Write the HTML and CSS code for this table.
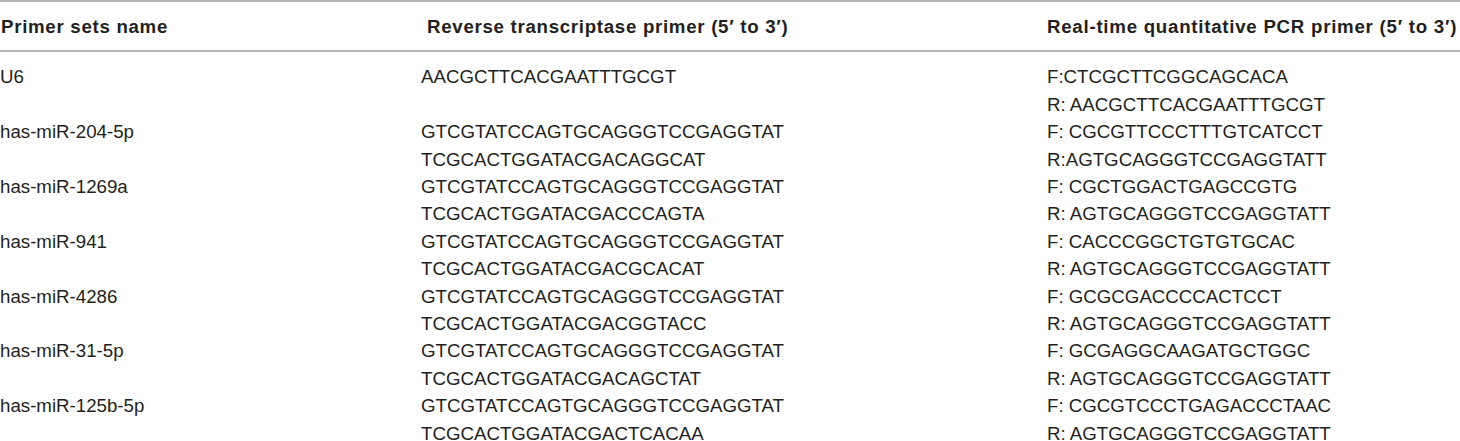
FILE: index.html
```html
<!DOCTYPE html>
<html>
<head>
<meta charset="utf-8">
<link rel="stylesheet" href="styles.css">
</head>
<body>
<div class="table">
  <div class="head">
    <div class="h h1">Primer sets name</div>
    <div class="h h2">Reverse transcriptase primer (5′ to 3′)</div>
    <div class="h h3">Real-time quantitative PCR primer (5′ to 3′)</div>
  </div>
  <div class="body">
    <div class="c">U6</div>
    <div class="c">AACGCTTCACGAATTTGCGT</div>
    <div class="c">F:CTCGCTTCGGCAGCACA<br>R: AACGCTTCACGAATTTGCGT</div>

    <div class="c">has-miR-204-5p</div>
    <div class="c">GTCGTATCCAGTGCAGGGTCCGAGGTAT<br>TCGCACTGGATACGACAGGCAT</div>
    <div class="c">F: CGCGTTCCCTTTGTCATCCT<br>R:AGTGCAGGGTCCGAGGTATT</div>

    <div class="c">has-miR-1269a</div>
    <div class="c">GTCGTATCCAGTGCAGGGTCCGAGGTAT<br>TCGCACTGGATACGACCCAGTA</div>
    <div class="c">F: CGCTGGACTGAGCCGTG<br>R: AGTGCAGGGTCCGAGGTATT</div>

    <div class="c">has-miR-941</div>
    <div class="c">GTCGTATCCAGTGCAGGGTCCGAGGTAT<br>TCGCACTGGATACGACGCACAT</div>
    <div class="c">F: CACCCGGCTGTGTGCAC<br>R: AGTGCAGGGTCCGAGGTATT</div>

    <div class="c">has-miR-4286</div>
    <div class="c">GTCGTATCCAGTGCAGGGTCCGAGGTAT<br>TCGCACTGGATACGACGGTACC</div>
    <div class="c">F: GCGCGACCCCACTCCT<br>R: AGTGCAGGGTCCGAGGTATT</div>

    <div class="c">has-miR-31-5p</div>
    <div class="c">GTCGTATCCAGTGCAGGGTCCGAGGTAT<br>TCGCACTGGATACGACAGCTAT</div>
    <div class="c">F: GCGAGGCAAGATGCTGGC<br>R: AGTGCAGGGTCCGAGGTATT</div>

    <div class="c">has-miR-125b-5p</div>
    <div class="c">GTCGTATCCAGTGCAGGGTCCGAGGTAT<br>TCGCACTGGATACGACTCACAA</div>
    <div class="c">F: CGCGTCCCTGAGACCCTAAC<br>R: AGTGCAGGGTCCGAGGTATT</div>
  </div>
</div>
</body>
</html>
```

FILE: styles.css
```css
html, body {
  margin: 0;
  padding: 0;
  background: #ffffff;
}
body {
  font-family: "Liberation Sans", Arial, sans-serif;
  color: #231f20;
  font-size: 18.7px;
  line-height: 27.4px;
}
.table {
  width: 1460px;
}
.head {
  display: grid;
  grid-template-columns: 421px 626px 1fr;
  border-top: 2px solid #b4b4b4;
  border-bottom: 2px solid #b4b4b4;
  padding: 11px 0 10px;
}
.h {
  font-weight: bold;
  letter-spacing: 0.7px;
  white-space: nowrap;
}
.h1 { padding-left: 1px; }
.h2 { padding-left: 6px; }
.h3 { letter-spacing: 0.74px; }
.body {
  display: grid;
  grid-template-columns: 421px 626px 1fr;
  padding-top: 11px;
}
.c {
  white-space: nowrap;
}
```
